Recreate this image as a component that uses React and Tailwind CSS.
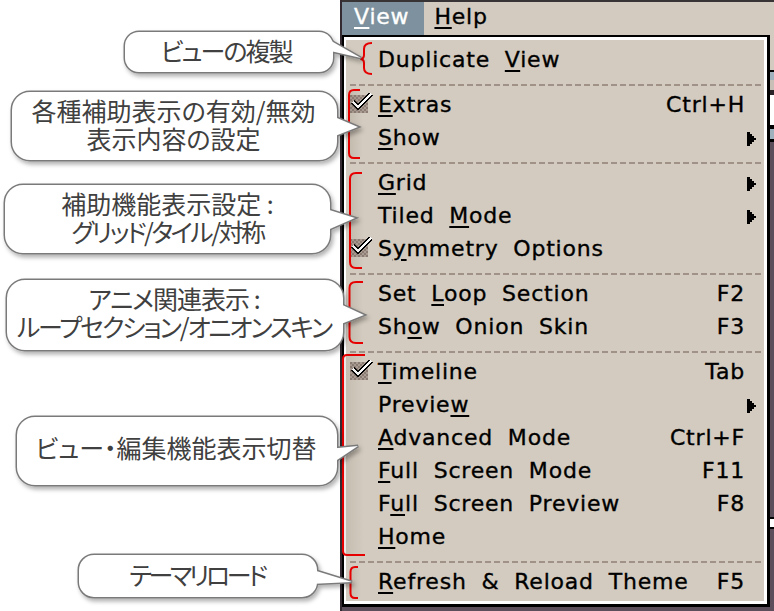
import React from "react";

const rows = [
  { label: "Duplicate View", u: 10 },
  { sep: true },
  { label: "Extras", u: 0, check: true, sc: "Ctrl+H" },
  { label: "Show", u: 0, arrow: true },
  { sep: true },
  { label: "Grid", u: 0, arrow: true },
  { label: "Tiled Mode", u: 6, arrow: true },
  { label: "Symmetry Options", u: 1, check: true },
  { sep: true },
  { label: "Set Loop Section", u: 4, sc: "F2" },
  { label: "Show Onion Skin", u: 2, sc: "F3" },
  { sep: true },
  { label: "Timeline", u: 0, check: true, sc: "Tab" },
  { label: "Preview", u: 6, arrow: true },
  { label: "Advanced Mode", u: 0, sc: "Ctrl+F" },
  { label: "Full Screen Mode", u: 0, sc: "F11" },
  { label: "Full Screen Preview", u: 1, sc: "F8" },
  { label: "Home", u: 0 },
  { sep: true },
  { label: "Refresh & Reload Theme", u: 0, sc: "F5" },
];

function Mn({ text, u }) {
  return (
    <span className="whitespace-pre">
      {text.slice(0, u)}
      <span className="underline decoration-2 underline-offset-[3px]">{text[u]}</span>
      {text.slice(u + 1)}
    </span>
  );
}

function Check() {
  const px = [];
  for (let y = 0; y < 9; y++) {
    for (let x = 0; x < 9; x++) {
      if ((x + y) % 2 === 0) px.push(<rect key={x + "-" + y} x={x * 2} y={2 + y * 2} width="2" height="2" fill="#8c7d74" />);
    }
  }
  return (
    <svg width="24" height="20" viewBox="0 0 24 20" shapeRendering="crispEdges" className="mb-[4px]">
      <rect x="0" y="2" width="18" height="18" fill="#ab9d93" />
      {px}
      <polyline points="3,9 8,14 21,1" fill="none" stroke="#000" strokeWidth="5" strokeLinejoin="miter" />
      <polyline points="3,9 8,14 21,1" fill="none" stroke="#fff" strokeWidth="2" strokeLinejoin="miter" />
    </svg>
  );
}

function Arrow() {
  return (
    <svg width="10" height="14" viewBox="0 0 10 14" shapeRendering="crispEdges" className="ml-[2px] mt-[2px]">
      <polygon points="0,0 3,0 3,2 5,2 5,4 7,4 7,6 9,6 9,8 7,8 7,10 5,10 5,12 3,12 3,14 0,14" fill="#000" />
    </svg>
  );
}

function Menu() {
  return (
    <div className="w-[428px] h-[572px] border-t-2 border-l-2 border-r-[3px] border-b-[3px] border-black">
      <div className="h-full border-t-[3px] border-l-2 border-r-[3px] border-b-[3px] border-white bg-[#d3cbbf] pt-[6px] flex flex-col">
        {rows.map((r, i) =>
          r.sep ? (
            <div key={i} className="h-[12px] pt-[5px] pl-[4px] pr-[1px]">
              <div className="h-[2px] bg-[repeating-linear-gradient(90deg,#a09287_0px,#a09287_6px,transparent_6px,transparent_9px)]" />
            </div>
          ) : (
            <div key={i} className="h-[33px] flex items-center pb-[6px] pl-[4px] text-black">
              <div className="w-[28px] flex items-center">{r.check ? <Check /> : null}</div>
              <div className="flex-1 leading-none">
                <Mn text={r.label} u={r.u} />
              </div>
              {r.sc ? <div className="leading-none whitespace-pre">{r.sc}</div> : null}
              <div className="w-[19px] flex items-center">{r.arrow ? <Arrow /> : null}</div>
            </div>
          )
        )}
      </div>
    </div>
  );
}

function Strip() {
  return (
    <div className="w-[4px] h-[572px] flex flex-col bg-[#5c4e5a]">
      <div className="h-[35px] bg-[#d3cbbf]" />
      <div className="h-[2px] bg-black" />
      <div className="h-[8px] bg-[#9fb1bd]" />
      <div className="h-[10px] bg-[#c8c0b6]" />
      <div className="h-[5px] bg-[#2a2428]" />
      <div className="h-[30px] bg-white" />
      <div className="h-[4px] bg-black" />
      <div className="h-[10px] bg-[#9fb1bd]" />
      <div className="h-[3px] bg-black" />
      <div className="h-[375px] bg-[#5c4e5a]" />
      <div className="h-[2px] bg-black" />
      <div className="h-[8px] bg-white" />
      <div className="h-[2px] bg-black" />
    </div>
  );
}

const bubbles = [
  { x: 125, y: 32, w: 208, h: 40, r: 14, tri: "326,38 361,58 326,50", lines: [["ビューの複製", "tracking-[-2px]"]], pb: 4, pr: 6 },
  { x: 12, y: 92, w: 325, h: 68, r: 18, tri: "330,115 358,127 330,138", lines: [["各種補助表示の有効/無効", "tracking-normal"], ["表示内容の設定", "tracking-normal"]], pb: 5, pr: 2 },
  { x: 5, y: 185, w: 325, h: 68, r: 18, tri: "323,208 355,218 323,232", lines: [["補助機能表示設定 :", "tracking-normal"], ["グリッド/タイル/対称", "tracking-[-2.5px]"]], pb: 4, pr: 0 },
  { x: 7, y: 280, w: 336, h: 70, r: 18, tri: "336,302 364,315 336,326", lines: [["アニメ関連表示 :", "tracking-[-1px]"], ["ループセクション/オニオンスキン", "tracking-[-2.1px]"]], pb: 7, pr: 2 },
  { x: 17, y: 417, w: 320, h: 68, r: 18, tri: "328,449 358,446 328,466", lines: [["ビュー・編集機能表示切替", "tracking-normal"]], pb: 9, pr: 2 },
  { x: 79, y: 555, w: 238, h: 42, r: 15, tri: "310,569 352,582 310,584", lines: [["テーマリロード", "tracking-[-3.4px]"]], pb: 5, pr: 2 },
];

const brackets = [
  "M372,43 Q364,43 364,49 L364,55 Q364,59 360,59 Q364,59 364,63 L364,68 Q364,74 372,74",
  "M360,90 H354 Q349,90 349,95 V153 Q349,158 354,158 H360",
  "M362,173 H356 Q350,173 350,179 V262 Q350,268 356,268 H362",
  "M363,282 H356 Q349.5,282 349.5,288 V337 Q349.5,343 356,343 H363",
  "M365,355 H347 Q343,355 343,359 V551 Q343,555 347,555 H365",
  "M358,567 H355 Q350.5,567 350.5,572 V593 Q350.5,598 355,598 H358",
];

function Overlay() {
  return (
    <svg className="absolute left-0 top-0 pointer-events-none" width="774" height="611" viewBox="0 0 774 611">
      <defs>
        <filter id="sh" x="-10%" y="-20%" width="125%" height="150%">
          <feDropShadow dx="2" dy="3" stdDeviation="2" floodColor="#000" floodOpacity="0.3" />
        </filter>
        <linearGradient id="band" x1="0" x2="1" y1="0" y2="0">
          <stop offset="0" stopColor="#7a6a60" stopOpacity="0.16" />
          <stop offset="1" stopColor="#7a6a60" stopOpacity="0" />
        </linearGradient>
      </defs>
      <rect x="350" y="91" width="13" height="66" fill="url(#band)" />
      <rect x="351" y="174" width="13" height="93" fill="url(#band)" />
      <rect x="350" y="283" width="13" height="59" fill="url(#band)" />
      <rect x="344" y="356" width="20" height="198" fill="url(#band)" />
      <rect x="351" y="568" width="10" height="29" fill="url(#band)" />
      {brackets.map((d, i) => (
        <path key={i} d={d} fill="none" stroke="#e60000" strokeWidth="2" />
      ))}
      {bubbles.map((b, i) => (
        <g key={i} filter="url(#sh)">
          <rect x={b.x} y={b.y} width={b.w} height={b.h} rx={b.r} fill="none" stroke="#7a7a7a" strokeWidth="3" />
          <polygon points={b.tri} fill="none" stroke="#7a7a7a" strokeWidth="3" strokeLinejoin="miter" />
          <rect x={b.x} y={b.y} width={b.w} height={b.h} rx={b.r} fill="#fff" />
          <polygon points={b.tri} fill="#fff" />
        </g>
      ))}
    </svg>
  );
}

function BubbleTexts() {
  return (
    <>
      {bubbles.map((b, i) => (
        <div
          key={i}
          className='absolute flex flex-col items-center justify-center text-[25px] leading-[28px] [word-spacing:normal] text-[#404040] font-["Noto_Sans_CJK_JP",sans-serif] [font-feature-settings:"palt"] whitespace-pre'
          style={{ left: b.x, top: b.y, width: b.w, height: b.h, paddingBottom: b.pb, paddingRight: b.pr }}
        >
          {b.lines.map(([l, cls], j) => (
            <div key={j} className={cls}>
              {l}
            </div>
          ))}
        </div>
      ))}
    </>
  );
}

export default function App() {
  return (
    <div className="relative w-[774px] h-[611px] overflow-hidden bg-white flex">
      <div className="w-[340px] h-full bg-white" />
      <div className="w-[434px] h-full flex flex-col border-l-2 border-[#332b31] bg-[#5c4e5a] font-['DejaVu_Sans',sans-serif] text-[22px] tracking-[0.8px] [word-spacing:7px] [-webkit-text-stroke:0.35px_currentColor]">
        <div className="h-[2px] bg-[#383436]" />
        <div className="h-[33px] flex bg-[#d3cbbf]">
          <div className="h-full flex items-center pl-[12px] pr-[15px] pb-[3px] bg-[#7d929e] text-white leading-none">
            <Mn text="View" u={0} />
          </div>
          <div className="h-full flex items-center pl-[10px] pb-[3px] text-black leading-none">
            <Mn text="Help" u={0} />
          </div>
        </div>
        <div className="flex">
          <Menu />
          <Strip />
        </div>
      </div>
      <Overlay />
      <BubbleTexts />
    </div>
  );
}
